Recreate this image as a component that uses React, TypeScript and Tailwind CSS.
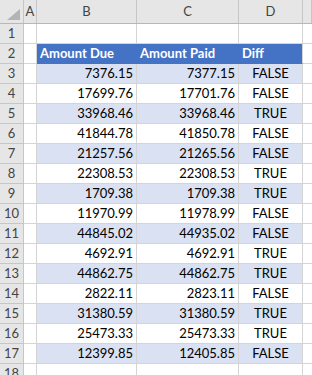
const rows = [
  { due: "7376.15", paid: "7377.15", diff: "FALSE" },
  { due: "17699.76", paid: "17701.76", diff: "FALSE" },
  { due: "33968.46", paid: "33968.46", diff: "TRUE" },
  { due: "41844.78", paid: "41850.78", diff: "FALSE" },
  { due: "21257.56", paid: "21265.56", diff: "FALSE" },
  { due: "22308.53", paid: "22308.53", diff: "TRUE" },
  { due: "1709.38", paid: "1709.38", diff: "TRUE" },
  { due: "11970.99", paid: "11978.99", diff: "FALSE" },
  { due: "44845.02", paid: "44935.02", diff: "FALSE" },
  { due: "4692.91", paid: "4692.91", diff: "TRUE" },
  { due: "44862.75", paid: "44862.75", diff: "TRUE" },
  { due: "2822.11", paid: "2823.11", diff: "FALSE" },
  { due: "31380.59", paid: "31380.59", diff: "TRUE" },
  { due: "25473.33", paid: "25473.33", diff: "TRUE" },
  { due: "12399.85", paid: "12405.85", diff: "FALSE" },
]

const cols = "grid grid-cols-[24px_13px_100px_102px_64px_1fr]"
const cell = "h-[20px] border-r border-b border-[#d4d4d4] flex items-end pb-[2px] px-[3px] text-[13px] leading-[15px] text-black"
const rowHead = "h-[20px] border-r border-b border-[#c6c6c6] bg-[#e6e6e6] flex items-center justify-center text-[13px] text-[#444]"

export default function App() {
  return (
    <div className="h-[375px] w-[312px] overflow-hidden bg-white" style={{ fontFamily: "Lato, 'Open Sans', sans-serif" }}>
      {/* column headers */}
      <div className={`${cols} h-[24px] bg-[#e6e6e6] border-b border-[#b8b8b8]`}>
        <div className="relative border-r border-[#c6c6c6]">
          <svg className="absolute right-[3px] bottom-[3px]" width="13" height="11" viewBox="0 0 13 11">
            <polygon points="13,0 13,11 0,11" fill="#b4b4b4" />
          </svg>
        </div>
        {["A", "B", "C", "D", ""].map((c, i) => (
          <div key={i} className="border-r border-[#c6c6c6] flex items-center justify-center text-[13px] text-[#444]">
            {c}
          </div>
        ))}
      </div>

      {/* row 1 */}
      <div className={cols}>
        <div className={rowHead}>1</div>
        <div className={cell} />
        <div className={cell} />
        <div className={cell} />
        <div className={cell} />
        <div className="h-[20px] border-b border-[#d4d4d4]" />
      </div>

      {/* row 2: table header */}
      <div className={cols}>
        <div className={rowHead}>2</div>
        <div className={cell} />
        <div className={`${cell} bg-[#4472c4] border-r-[#4472c4] border-b-[#4472c4] text-white font-bold`}>Amount Due</div>
        <div className={`${cell} bg-[#4472c4] border-r-[#4472c4] border-b-[#4472c4] text-white font-bold`}>Amount Paid</div>
        <div className={`${cell} bg-[#4472c4] border-r-[#d4d4d4] border-b-[#4472c4] text-white font-bold`}>Diff</div>
        <div className="h-[20px] border-b border-[#d4d4d4]" />
      </div>

      {rows.map((r, i) => {
        const band = i % 2 === 0 ? "bg-[#d9e1f2]" : "bg-white"
        return (
          <div key={i} className={cols}>
            <div className={rowHead}>{i + 3}</div>
            <div className={cell} />
            <div className={`${cell} ${band} justify-end`}>{r.due}</div>
            <div className={`${cell} ${band} justify-end`}>{r.paid}</div>
            <div className={`${cell} ${band} justify-center`}>{r.diff}</div>
            <div className="h-[20px] border-b border-[#d4d4d4]" />
          </div>
        )
      })}

      {/* row 18 */}
      <div className={cols}>
        <div className={rowHead}>18</div>
        <div className={cell} />
        <div className={cell} />
        <div className={cell} />
        <div className={cell} />
        <div className="h-[20px] border-b border-[#d4d4d4]" />
      </div>
    </div>
  )
}
